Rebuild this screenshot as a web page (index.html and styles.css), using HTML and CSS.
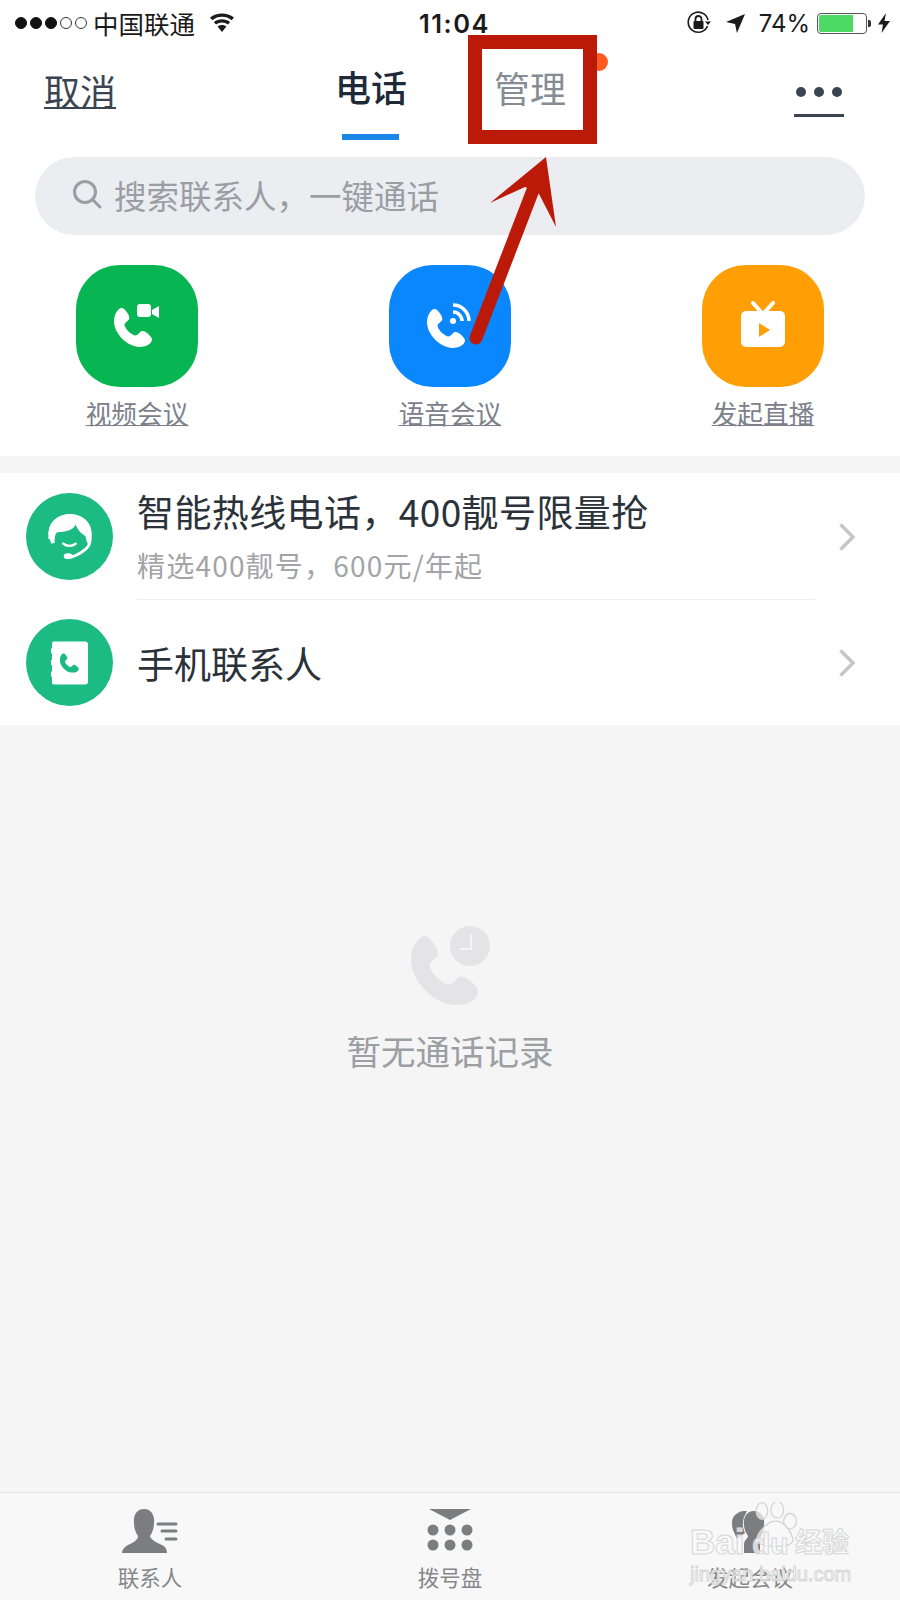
FILE: index.html
```html
<!DOCTYPE html>
<html lang="zh-CN">
<head>
<meta charset="UTF-8" />
<title>电话</title>
<link rel="stylesheet" href="styles.css">
</head>
<body>

<svg class="defs" width="0" height="0">
  <symbol id="handset" viewBox="0 0 70 70">
    <path d="M12 0C6 3 0 12 0 24C0 46 24 70 46 70C56 70 66 66 68 58C69 54 66 51 62 47C56 42 52 40 48 42C44 46 41 50 36 49C28 45 21 38 19 31C18 26 26 23 27 20C29 16 25 10 21 5C18 1 15-1 12 0Z"/>
  </symbol>
</svg>

<div class="page">

  <div class="status">
    <div class="status-left">
      <span class="dot on"></span><span class="dot on"></span><span class="dot on"></span><span class="dot"></span><span class="dot"></span>
      <span class="carrier">中国联通</span>
      <svg class="wifi" viewBox="0 0 26 19"><path d="M13 19L8.6 13.6C11.2 11.6 14.8 11.6 17.4 13.6Z"/><path d="M7 11.6L4.8 9C9.6 5.2 16.4 5.2 21.2 9L19 11.6C15.4 8.9 10.6 8.9 7 11.6Z"/><path d="M3.4 7.2L1 4.6C7.8-1 18.2-1 25 4.6L22.6 7.2C16.9 2.6 9.1 2.6 3.4 7.2Z"/></svg>
    </div>
    <div class="time">11:04</div>
    <div class="status-right">
      <svg class="rotlock" viewBox="0 0 26 24"><path d="M21.5 15A10 10 0 1 1 22 9" fill="none" stroke="#1b1b1b" stroke-width="1.6"/><path d="M19 10.500h6l-3 3.500z" fill="#1b1b1b"/><rect x="7.500" y="10" width="10" height="8" rx="1" fill="#1b1b1b"/><path d="M9.500 10V8a3 3 0 0 1 6 0v2" fill="none" stroke="#1b1b1b" stroke-width="1.800"/></svg>
      <svg class="arrow-loc" viewBox="0 0 20 20"><path d="M20 0L0 8.500L9.500 10.500L11.500 20Z" fill="#1b1b1b"/></svg>
      <span class="pct">74%</span>
      <div class="battery"><div class="battery-fill"></div></div>
      <svg class="bolt" viewBox="0 0 12 20"><path d="M8 0L0 11.500H5L3.500 20L12 8H6.500Z" fill="#1b1b1b"/></svg>
    </div>
  </div>

  <div class="nav">
    <span class="cancel">取消</span>
    <span class="tab active">电话</span>
    <span class="tab">管理</span>
    <div class="more">
      <div class="more-dots"><i></i><i></i><i></i></div>
    </div>
  </div>

  <div class="search-wrap">
    <div class="search">
      <svg class="search-icon" viewBox="0 0 30 30"><circle cx="13" cy="13" r="10.500" fill="none" stroke="#9a9ea4" stroke-width="3"/><path d="M21 21l7 7" stroke="#9a9ea4" stroke-width="3" stroke-linecap="round"/></svg>
      <span>搜索联系人，一键通话</span>
    </div>
  </div>

  <div class="quick">
    <div class="quick-item">
      <div class="quick-icon green">
        <svg class="q-svg" viewBox="0 0 50 50">
          <use href="#handset" x="2" y="7" width="39" height="39" fill="#fff"/>
          <rect x="25" y="3" width="14" height="13" rx="3" fill="#fff"/>
          <path d="M40 9l7-4v12l-7-4z" fill="#fff"/>
        </svg>
      </div>
      <span class="quick-label">视频会议</span>
    </div>
    <div class="quick-item">
      <div class="quick-icon blue">
        <svg class="q-svg" viewBox="0 0 50 50">
          <use href="#handset" x="2" y="8" width="39" height="39" fill="#fff"/>
          <circle cx="28" cy="20" r="3" fill="#fff"/>
          <path d="M28 11a9 9 0 0 1 9 9M28 4a16 16 0 0 1 16 16" fill="none" stroke="#fff" stroke-width="3.500"/>
        </svg>
      </div>
      <span class="quick-label">语音会议</span>
    </div>
    <div class="quick-item">
      <div class="quick-icon orange">
        <svg class="q-svg" viewBox="0 0 50 50">
          <path d="M15 2l9 10M35 2l-9 10" stroke="#fff" stroke-width="4" stroke-linecap="round"/>
          <rect x="3" y="10" width="44" height="36" rx="5" fill="#fff"/>
          <path d="M21 22l11 7-11 7z" fill="#ff9f05"/>
        </svg>
      </div>
      <span class="quick-label">发起直播</span>
    </div>
  </div>

  <div class="list">
    <div class="row">
      <div class="circle">
        <svg class="c-svg" viewBox="0 0 50 50">
          <path d="M4 27C2 10 13 3 25 3C37 3 48 10 46 27C46 33 44 35 42 37C36 42 30 46 23 46" fill="none" stroke="#fff" stroke-width="3"/>
          <path d="M3 21C3 8 14 1 25 1C36 1 47 8 47 21C47 26 45 30 43 32L41 24C38 22 33 19 31 12C28 18 20 20 12 20C9 21 9 27 9 31L6 32C4 29 3 25 3 21Z" fill="#fff"/>
          <path d="M18 32C21 35 28 35 31 32" fill="none" stroke="#fff" stroke-width="2.500" stroke-linecap="round"/>
          <ellipse cx="23" cy="45" rx="4.500" ry="3" fill="#fff"/>
        </svg>
      </div>
      <div class="row-body two">
        <div class="row-text">
          <div class="row-title">智能热线电话，400靓号限量抢</div>
          <div class="row-sub">精选400靓号，600元/年起</div>
        </div>
      </div>
      <svg class="chev" viewBox="0 0 18 30"><path d="M2.500 2.500L15 15L2.500 27.500" fill="none" stroke="#c4c6ca" stroke-width="3.500"/></svg>
    </div>
    <div class="row">
      <div class="circle">
        <svg class="c-svg book" viewBox="0 0 38 44">
          <path d="M3 0H35a3 3 0 0 1 3 3V41a3 3 0 0 1-3 3H3a2 2 0 0 1-2-2V36H0V31H1V24H0V19H1V12H0V7H1V2a2 2 0 0 1 2-2Z" fill="#fff"/>
          <use href="#handset" x="9" y="12" width="20" height="20" fill="#1cbb83"/>
        </svg>
      </div>
      <div class="row-body">
        <div class="row-title">手机联系人</div>
      </div>
      <svg class="chev" viewBox="0 0 18 30"><path d="M2.500 2.500L15 15L2.500 27.500" fill="none" stroke="#c4c6ca" stroke-width="3.500"/></svg>
    </div>
  </div>

  <div class="empty">
    <svg class="empty-icon" viewBox="0 0 80 80">
      <use href="#handset" x="1" y="11" width="69" height="69" fill="#e4e4e6"/>
      <circle cx="60" cy="21" r="20" fill="#e4e4e6"/>
      <path d="M61 9V24H50" fill="none" stroke="#f5f5f6" stroke-width="2"/>
    </svg>
    <div class="empty-text">暂无通话记录</div>
  </div>

  <div class="tabbar">
    <div class="tabbar-item">
      <svg class="t-svg" viewBox="0 0 56 44">
        <path d="M22 0C29 0 33 6 32 14C32 20 30 24 28 27C29 31 34 33 40 36C44 38 45 41 45 44H0C0 41 2 38 6 36C12 33 16 31 16 27C14 24 12 20 12 14C11 6 15 0 22 0Z" fill="#7b7d81"/>
        <path d="M36 15H54M40 22H54M44 30H54" stroke="#7b7d81" stroke-width="3" stroke-linecap="round"/>
      </svg>
      <span>联系人</span>
    </div>
    <div class="tabbar-item">
      <svg class="t-svg" viewBox="0 0 56 44">
        <path d="M7 0H49L28 11H28Z" fill="#7b7d81"/>
        <g fill="#7b7d81"><circle cx="11" cy="21" r="5.500"/><circle cx="28" cy="21" r="5.500"/><circle cx="45" cy="21" r="5.500"/><circle cx="11" cy="36" r="5.500"/><circle cx="28" cy="36" r="5.500"/><circle cx="45" cy="36" r="5.500"/></g>
      </svg>
      <span>拨号盘</span>
    </div>
    <div class="tabbar-item">
      <svg class="t-svg" viewBox="0 0 56 44">
        <path d="M16 4C18 2 22 2 25 2L22 8C20 14 21 20 23 24L15 30C13 24 10 22 10 14C10 9 12 6 16 4Z" fill="#7b7d81"/>
        <path d="M32 2C39 2 43 8 42 16C42 22 40 26 38 29V44H22V36C22 30 26 30 26 27C24 24 22 20 22 16C21 8 25 2 32 2Z" fill="#7b7d81"/>
      </svg>
      <span>发起会议</span>
    </div>
  </div>

  <!-- annotation drawn on the screenshot -->
  <div class="mark-dot"></div>
  <div class="mark-box"></div>
  <svg class="mark-arrow" viewBox="0 0 900 1600">
    <path d="M476 338L533 190" stroke="#bb1a08" stroke-width="13" stroke-linecap="round"/>
    <path d="M546 157L490 203L525 187L538 192L556 227Z" fill="#bb1a08"/>
  </svg>

  <!-- watermark -->
  <div class="wm">
    <div class="wm-top">
      <span class="wm-bai">Bai</span>
      <svg class="wm-paw" viewBox="0 0 36 36">
        <g fill="#f8f8f8" fill-opacity="0.7" stroke="#d4d4d4" stroke-width="1"><ellipse cx="7" cy="7" rx="4.500" ry="6.500"/><ellipse cx="19" cy="6" rx="5" ry="6.500"/><ellipse cx="29" cy="15" rx="5" ry="6"/><path d="M3 31C2 25 11 15 18 15C25 15 32 26 31 31C29 36 8 36 3 31Z"/></g>
      </svg>
      <span class="wm-du">du</span>
      <span class="wm-jy">经验</span>
    </div>
    <div class="wm-url">jingyan.baidu.com</div>
  </div>

</div>

</body>
</html>
```

FILE: styles.css
```css
* {
  box-sizing: border-box;
}
body {
  margin: 0;
  font-family: "Noto Sans CJK SC", "Noto Sans", sans-serif;
  background: #fff;
}
.defs {
  position: absolute;
}
.page {
  position: relative;
  width: 900px;
  height: 1600px;
  display: flex;
  flex-direction: column;
  overflow: hidden;
  background: #f5f5f6;
}

/* status bar */
.status {
  height: 46px;
  flex: none;
  display: flex;
  align-items: center;
  justify-content: space-between;
  padding: 0 10px 0 15px;
  background: #fff;
  color: #1b1b1b;
}
.status-left {
  display: flex;
  align-items: center;
  width: 300px;
}
.dot {
  width: 12px;
  height: 12px;
  margin-right: 3px;
  border-radius: 50%;
  border: 1px solid #333;
}
.dot.on {
  background: #111;
  border-color: #111;
}
.carrier {
  margin-left: 3px;
  font-size: 25.500px;
  line-height: 30px;
}
.wifi {
  width: 26px;
  height: 19px;
  margin-left: 14px;
  margin-top: -2px;
  fill: #1b1b1b;
}
.time {
  margin-left: 104px;
  font-family: "Inter", sans-serif;
  font-size: 25.500px;
  font-weight: 600;
  letter-spacing: 1.500px;
}
.status-right {
  margin-left: auto;
  display: flex;
  align-items: center;
}
.rotlock {
  width: 26px;
  height: 24px;
  margin-left: 2px;
}
.arrow-loc {
  width: 19px;
  height: 19px;
  margin-left: 14px;
}
.pct {
  margin-left: 14px;
  font-family: "Inter", sans-serif;
  font-size: 24px;
}
.battery {
  position: relative;
  width: 50px;
  height: 21px;
  margin-left: 7px;
  padding: 1px;
  border: 1px solid #555;
  border-radius: 4px;
}
.battery::after {
  content: "";
  position: absolute;
  right: -5px;
  top: 6px;
  width: 3px;
  height: 7px;
  background: #333;
  border-radius: 0 2px 2px 0;
}
.battery-fill {
  width: 74%;
  height: 100%;
  background: #4cd964;
  border-radius: 2px 0 0 2px;
}
.bolt {
  width: 12px;
  height: 20px;
  margin-left: 11px;
}

/* nav */
.nav {
  height: 111px;
  flex: none;
  display: flex;
  align-items: flex-start;
  padding-left: 44px;
  background: #fff;
}
.cancel {
  margin-top: 20px;
  font-size: 36px;
  line-height: 48px;
  color: #3b4552;
  text-decoration: underline;
  text-decoration-thickness: 2px;
}
.tab {
  position: relative;
  margin-top: 16px;
  font-size: 36px;
  line-height: 50px;
  color: #878c94;
}
.cancel + .tab {
  margin-left: 219px;
}
.tab + .tab {
  margin-left: 87px;
}
.tab.active {
  margin-top: 15px;
  font-weight: 500;
  color: #1e2a38;
}
.tab.active::after {
  content: "";
  position: absolute;
  left: 7px;
  top: 73px;
  width: 57px;
  height: 6px;
  background: #1a86e8;
}
.more {
  margin-left: auto;
  margin-right: 56px;
  margin-top: 41px;
  width: 50px;
  height: 30px;
  border-bottom: 3px solid #3b4552;
}
.more-dots {
  display: flex;
  justify-content: space-between;
  padding: 0 2px;
}
.more-dots i {
  width: 10px;
  height: 10px;
  border-radius: 50%;
  background: #3b4552;
}

/* search */
.search-wrap {
  flex: none;
  padding: 0 35px;
  background: #fff;
}
.search {
  height: 78px;
  display: flex;
  align-items: center;
  gap: 12px;
  padding-left: 37px;
  padding-bottom: 4px;
  border-radius: 39px;
  background: #ebedf0;
  font-size: 32.500px;
  color: #9a9ea4;
}
.search-icon {
  width: 30px;
  height: 30px;
}

/* quick actions */
.quick {
  flex: none;
  height: 221px;
  display: grid;
  grid-template-columns: repeat(3, 313px);
  justify-content: center;
  padding-top: 30px;
  background: #fff;
}
.quick-item {
  display: flex;
  flex-direction: column;
  align-items: center;
}
.quick-icon {
  width: 122px;
  height: 122px;
  display: flex;
  align-items: center;
  justify-content: center;
  border-radius: 44px;
}
.green {
  background: #07b553;
}
.blue {
  background: #0a87fc;
}
.orange {
  background: #ff9f05;
}
.q-svg {
  width: 50px;
  height: 50px;
}
.quick-label {
  margin-top: 8px;
  font-size: 25.700px;
  line-height: 36px;
  color: #7c808a;
  text-decoration: underline;
  text-decoration-thickness: 1px;
}

/* list */
.list {
  flex: none;
  height: 252px;
  margin-top: 17px;
  background: #fff;
}
.row {
  height: 125px;
  display: flex;
  align-items: center;
  padding-left: 26px;
}
.row:first-child {
  height: 127px;
}
.circle {
  flex: none;
  width: 87px;
  height: 87px;
  display: flex;
  align-items: center;
  justify-content: center;
  border-radius: 50%;
  background: #1cbb83;
}
.c-svg {
  width: 48px;
  height: 48px;
}
.c-svg.book {
  width: 37px;
  height: 44px;
}
.row-body {
  align-self: stretch;
  width: 678px;
  margin-left: 24px;
  display: flex;
  align-items: center;
}
.row-body.two {
  padding-bottom: 2px;
  border-bottom: 1px solid #eceeef;
}
.row-title {
  font-size: 37px;
  line-height: 46px;
  color: #2b323a;
}
.two .row-title {
  letter-spacing: 0.400px;
}
.row-sub {
  margin-top: 14px;
  font-size: 28px;
  line-height: 34px;
  letter-spacing: 1.200px;
  color: #a2a4a7;
}
.chev {
  width: 18px;
  height: 30px;
  margin-left: 23px;
}

/* empty state */
.empty {
  flex: 1;
  display: flex;
  flex-direction: column;
  align-items: center;
  padding-top: 200px;
}
.empty-icon {
  width: 80px;
  height: 80px;
}
.empty-text {
  margin-top: 20px;
  font-size: 34.500px;
  line-height: 50px;
  color: #9b9ea3;
}

/* bottom tabs */
.tabbar {
  flex: none;
  height: 108px;
  display: grid;
  grid-template-columns: repeat(3, 300px);
  border-top: 1px solid #e4e4e6;
  background: #f8f8f8;
}
.tabbar-item {
  display: flex;
  flex-direction: column;
  align-items: center;
  padding-top: 16px;
  font-size: 21.500px;
  line-height: 30px;
  color: #85878b;
}
.t-svg {
  width: 56px;
  height: 44px;
  margin-bottom: 9px;
}

/* red annotation */
.mark-box {
  position: absolute;
  left: 468px;
  top: 35px;
  width: 129px;
  height: 109px;
  border: 14px solid #bb1a08;
}
.mark-dot {
  position: absolute;
  left: 590px;
  top: 53px;
  width: 18px;
  height: 18px;
  border-radius: 50%;
  background: #ff5a1f;
}
.mark-arrow {
  position: absolute;
  left: 0;
  top: 0;
  width: 900px;
  height: 1600px;
}

/* baidu watermark */
.wm {
  position: absolute;
  left: 690px;
  top: 1502px;
  width: 170px;
  font-family: "Liberation Sans", sans-serif;
  color: rgba(250, 250, 250, 0.75);
  -webkit-text-stroke: 1px #d6d6d6;
}
.wm-top {
  position: relative;
  height: 60px;
}
.wm-bai {
  position: absolute;
  left: 0;
  top: 20px;
  font-size: 35px;
  font-weight: 700;
}
.wm-paw {
  position: absolute;
  left: 63px;
  top: 0;
  width: 46px;
  height: 46px;
}
.wm-du {
  position: absolute;
  left: 62px;
  top: 25px;
  font-size: 30px;
  font-weight: 700;
}
.wm-jy {
  position: absolute;
  left: 105px;
  top: 22px;
  font-family: "Noto Sans CJK SC", sans-serif;
  font-size: 27px;
  font-weight: 700;
  line-height: 34px;
}
.wm-url {
  font-size: 20px;
  line-height: 24px;
}
```
